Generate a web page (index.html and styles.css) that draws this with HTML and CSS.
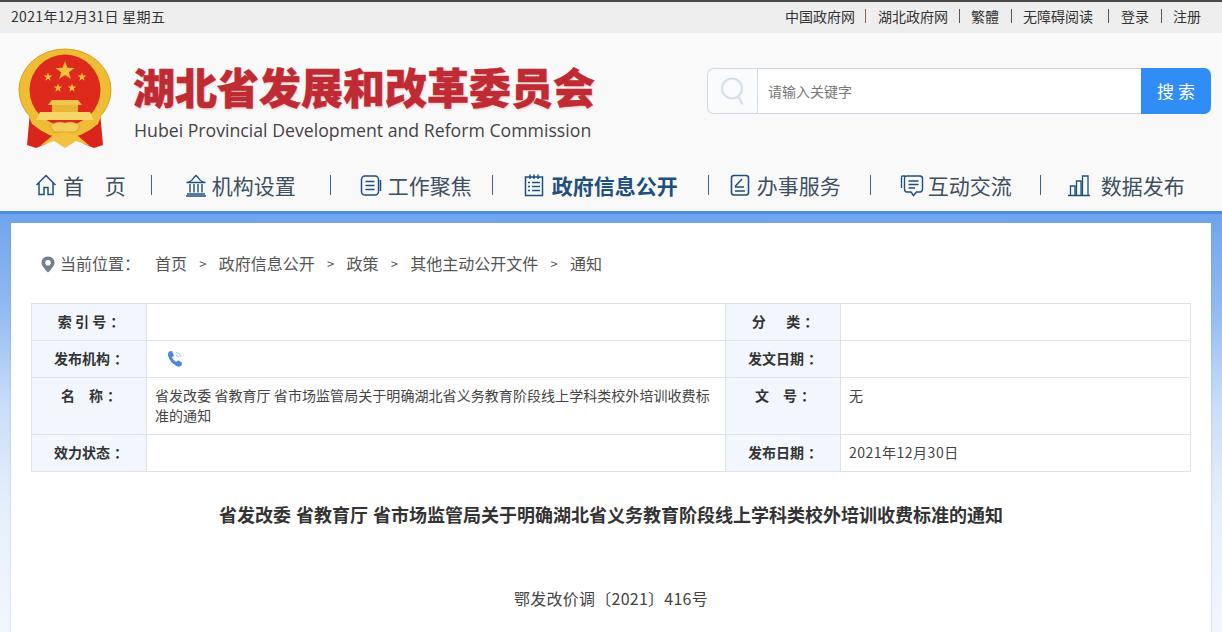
FILE: index.html
```html
<!DOCTYPE html>
<html lang="zh-CN">
<head>
<meta charset="utf-8">
<title>湖北省发展和改革委员会</title>
<link rel="stylesheet" href="styles.css">
</head>
<body>
<div class="topbar">
  <span class="date">2021年12月31日 星期五</span>
  <div class="toplinks">
    <a class="w1">中国政府网</a><i class="s1"></i><a class="w2">湖北政府网</a><i class="s2"></i><a class="w3">繁體</a><i class="s3"></i><a class="w4">无障碍阅读</a><i class="s4"></i><a class="w5">登录</a><i class="s5"></i><a>注册</a>
  </div>
</div>
<div class="head">
  <div class="brand">
    <svg class="emblem" width="100" height="102" viewBox="0 0 100 102">
      <defs><polygon id="st" points="0,-10 2.350,-3.240 9.510,-3.090 3.800,1.240 5.880,8.090 0,4 -5.880,8.090 -3.800,1.240 -9.510,-3.090 -2.350,-3.240"/></defs>
      <path d="M14 64 L11 97 L20 100 L30 96 L42 84 L30 72Z" fill="#d8261c"/>
      <path d="M84 64 L87 97 L78 100 L68 96 L56 84 L68 72Z" fill="#d8261c"/>
      <ellipse cx="49" cy="42" rx="46" ry="41" fill="#eebc35" stroke="#dca11f" stroke-width="1"/>
      <ellipse cx="49" cy="42" rx="35.500" ry="35.500" fill="#dd2a1c"/>
      <use href="#st" transform="translate(49 23) scale(1)" fill="#f3c03c"/>
      <use href="#st" transform="translate(32 29) scale(.45)" fill="#f3c03c"/>
      <use href="#st" transform="translate(66 29) scale(.45)" fill="#f3c03c"/>
      <use href="#st" transform="translate(42 40) scale(.45)" fill="#f3c03c"/>
      <use href="#st" transform="translate(56 40) scale(.45)" fill="#f3c03c"/>
      <path d="M36 52 H62 L66 57 H32Z" fill="#f2c64e"/>
      <rect x="36" y="57" width="26" height="7" fill="#e8b534"/>
      <path d="M24 64 H74 L78 72 H20Z" fill="#f7d566"/>
      <path d="M12 66 Q49 96 86 66 L82 76 Q49 104 16 76Z" fill="#eebc35"/>
      <path d="M34 78 Q41 72 49 75 Q57 72 64 78 L60 84 H38Z" fill="#f4cd5b" stroke="#c8901e" stroke-width=".6"/>
      <path d="M24 98 L36 88 L49 84 L62 88 L74 98 L60 93 L49 100 L38 93Z" fill="#f2c23f"/>
    </svg>
    <div class="brandtext">
      <div class="cn">湖北省发展和改革委员会</div>
      <div class="en">Hubei Provincial Development and Reform Commission</div>
    </div>
  </div>
  <div class="search">
    <div class="sicon">
      <svg width="26" height="30" viewBox="0 0 26 30"><circle cx="12" cy="12.500" r="10" fill="none" stroke="#d5deeb" stroke-width="2"/><path d="M18.500 21 L22 27.500" stroke="#d5deeb" stroke-width="2.500" stroke-linecap="round"/></svg>
    </div>
    <div class="sinput">请输入关键字</div>
    <div class="sbtn">搜 索</div>
  </div>
</div>
<nav class="nav">
  <a class="n1"><svg width="22" height="24" viewBox="0 0 22 24"><path d="M1.500 12 L11 2.500 L20.500 12 M4 10 V21.500 H9 V14.500 H13 V21.500 H18 V10" fill="none" stroke="#1f4f7f" stroke-width="1.500"/></svg><span class="wide">首 页</span></a><i class="bar b1"></i>
  <a class="n2"><svg width="22" height="24" viewBox="0 0 22 24"><path d="M1.500 9.500 Q6 9 8.500 5 L11 2.500 L13.500 5 Q16 9 20.500 9.500Z M2 21 H20 M1 23 H21 M5 11 V19.500 M9 11 V19.500 M13 11 V19.500 M17 11 V19.500" fill="none" stroke="#1f4f7f" stroke-width="1.400"/></svg><span>机构设置</span></a><i class="bar b2"></i>
  <a class="n3"><svg width="22" height="24" viewBox="0 0 22 24"><rect x="1.500" y="3" width="17" height="19" rx="3.500" fill="none" stroke="#1f4f7f" stroke-width="1.500"/><path d="M20.500 7 V18 M5.500 8.500 H14.500 M5.500 12.500 H14.500 M5.500 16.500 H14.500" fill="none" stroke="#1f4f7f" stroke-width="1.500"/></svg><span>工作聚焦</span></a><i class="bar b3"></i>
  <a class="n4 on"><svg width="20" height="24" viewBox="0 0 20 24"><rect x="1.500" y="4" width="17" height="18.500" fill="none" stroke="#1f4f7f" stroke-width="1.500"/><path d="M6 1.500 V6 M10 1.500 V6 M14 1.500 V6 M4 9.500 H6 M8 9.500 H16 M4 13.500 H6 M8 13.500 H16 M4 17.500 H6 M8 17.500 H16" fill="none" stroke="#1f4f7f" stroke-width="1.500"/></svg><span>政府信息公开</span></a><i class="bar b4"></i>
  <a class="n5"><svg width="20" height="24" viewBox="0 0 20 24"><rect x="1.500" y="2.500" width="17" height="19.500" rx="2.500" fill="none" stroke="#1f4f7f" stroke-width="1.600"/><path d="M5 13.500 L12 6 M5 14 H14 M5 18 H15" fill="none" stroke="#1f4f7f" stroke-width="1.500"/></svg><span>办事服务</span></a><i class="bar b5"></i>
  <a class="n6"><svg width="24" height="24" viewBox="0 0 24 24"><path d="M5 3 H2.500 Q1.500 3 1.500 4.500 V15" fill="none" stroke="#1f4f7f" stroke-width="1.300"/><path d="M7 3 H20 Q22.500 3 22.500 5.500 V16 Q22.500 19 20 19 H16.500 L13.500 22.500 L11 19 H7 Q4.500 19 4.500 16 V5.500 Q4.500 3 7 3Z M8.500 8 H18.500 M8.500 11.500 H18.500 M8.500 15 H15" fill="none" stroke="#1f4f7f" stroke-width="1.400"/></svg><span>互动交流</span></a><i class="bar b6"></i>
  <a class="n7"><svg width="24" height="24" viewBox="0 0 24 24"><path d="M1 22.500 H23 M3.500 22 V13 H8 V22 M9.500 22 V8 H14 V22 M15.500 22 V3 H21 V22" fill="none" stroke="#1f4f7f" stroke-width="1.300"/></svg><span>数据发布</span></a>
</nav>
<main class="stage">
  <div class="card">
    <div class="crumbs">
      <svg width="14" height="17" viewBox="0 0 14 17"><path d="M7 0.500 C3.200 0.500 0.500 3.300 0.500 6.800 C0.500 10.800 7 16.500 7 16.500 C7 16.500 13.500 10.800 13.500 6.800 C13.500 3.300 10.800 0.500 7 0.500Z" fill="#6f7f8c"/><circle cx="7" cy="6.800" r="2.800" fill="#fff"/></svg>
      <span class="where">当前位置：</span>
      <a>首页</a><em>&gt;</em><a>政府信息公开</a><em>&gt;</em><a>政策</a><em>&gt;</em><a>其他主动公开文件</a><em>&gt;</em><a>通知</a>
    </div>
    <table class="meta">
      <colgroup><col class="c1"><col class="c2"><col class="c3"><col class="c4"></colgroup>
      <tr class="r1"><th>索 引 号<span class="co">：</span></th><td></td><th>分&nbsp;&nbsp;　类<span class="co">：</span></th><td></td></tr>
      <tr class="r1"><th>发布机构<span class="co">：</span></th><td><svg class="phone" width="18" height="18" viewBox="0 0 18 18"><path d="M3 1.500 L6 1 L8 5.500 L6 7.300 Q7.200 10.500 10.200 12 L12 10.300 L16 12.500 L15.500 15.500 Q13.500 17.300 11 16.300 Q4 13 2 5.500 Q1.700 3 3 1.500Z" fill="#4a8ad4"/><path d="M10 2.500 Q14 3 15 7 M10 5 Q12 5.500 12.600 7.500" fill="none" stroke="#9dc0e8" stroke-width="1"/></svg></td><th>发文日期<span class="co">：</span></th><td></td></tr>
      <tr class="r2"><th>名　称<span class="co">：</span></th><td>省发改委 省教育厅 省市场监管局关于明确湖北省义务教育阶段线上学科类校外培训收费标准的通知</td><th>文　号<span class="co">：</span></th><td>无</td></tr>
      <tr class="r1"><th>效力状态<span class="co">：</span></th><td></td><th>发布日期<span class="co">：</span></th><td class="num">2021年12月30日</td></tr>
    </table>
    <h1 class="title">省发改委 省教育厅 省市场监管局关于明确湖北省义务教育阶段线上学科类校外培训收费标准的通知</h1>
    <p class="docno">鄂发改价调〔2021〕416号</p>
  </div>
</main>
</body>
</html>
```
FILE: styles.css
```css
* { box-sizing: border-box; }
html, body { margin: 0; padding: 0; height: 632px; overflow: hidden; }
body { font-family: "Noto Sans CJK SC", "Liberation Sans", sans-serif; color: #333; background: #fff; }
a { color: inherit; text-decoration: none; }
i, em { font-style: normal; }

.topbar { height: 33px; background: #eeeeee; border-top: 2px solid #4a4a4a; display: flex; justify-content: space-between; align-items: center; padding: 0 21px 3px 11px; font-size: 14px; color: #333; }
.date { letter-spacing: .33px; }
.toplinks { display: flex; align-items: center; }
.toplinks i { width: 1px; height: 14px; background: #555; }
.w1 { margin-right: 10px; }
.toplinks .s1 { margin-right: 12px; background: #8a6d3b; }
.w2 { margin-right: 11px; } .s2 { margin-right: 11px; }
.w3 { margin-right: 12px; } .s3 { margin-right: 11px; }
.w4 { margin-right: 15px; } .s4 { margin-right: 12px; }
.w5 { margin-right: 12px; } .s5 { margin-right: 11px; }

.head { height: 119px; background: #f9f9fa; display: flex; justify-content: space-between; padding: 15px 11px 0 16px; }
.brand { display: flex; }
.emblem { display: block; }
.brandtext { margin-left: 17px; margin-top: 13px; }
.cn { font-size: 42px; font-weight: 900; line-height: 50px; color: #bf2a33; white-space: nowrap; text-shadow: 1px 2px 2px #eed9d9; -webkit-text-stroke: .5px #bf2a33; }
.en { font-family: "Open Sans", "Liberation Sans", sans-serif; font-size: 17.700px; line-height: 26px; color: #444; margin-left: 1px; white-space: nowrap; margin-top: 6px; }

.search { width: 504px; height: 46px; margin-top: 20px; display: flex; border: 1px solid #cfd5e2; border-right: 0; border-radius: 7px; background: #fff; }
.sicon { width: 50px; display: flex; align-items: center; justify-content: center; background: #fafbfc; border-right: 1px solid #d4dae5; border-radius: 7px 0 0 7px; }
.sinput { flex: 1; font-size: 14px; color: #777; line-height: 44px; padding-left: 10px; }
.sbtn { width: 70px; margin: -1px 0; background: #2f8df5; color: #fff; font-size: 17px; text-align: center; line-height: 46px; border-radius: 0 7px 7px 0; }

.nav { height: 62px; background: #f9f9fa; border-bottom: 3px solid #4a90e2; display: flex; align-items: center; color: #1f4f7f; font-size: 21px; padding-top: 6px; }
.nav a { display: flex; align-items: center; white-space: nowrap; color: #3d4f60; }
.nav a svg { flex: none; }
.nav .on { color: #1f4f7f; font-weight: 700; }
.bar { width: 1px; height: 20px; background: #3d6488; flex: none; }
.wide { word-spacing: 16px; }
.n1 { margin-left: 35px; gap: 6px; } .b1 { margin-left: 25px; }
.n2 { margin-left: 33px; gap: 5px; } .b2 { margin-left: 34px; }
.n3 { margin-left: 29px; gap: 6px; } .b3 { margin-left: 20px; }
.n4 { margin-left: 31px; gap: 8px; } .b4 { margin-left: 30px; }
.n5 { margin-left: 21px; gap: 7px; } .b5 { margin-left: 29px; }
.n6 { margin-left: 29px; gap: 4px; } .b6 { margin-left: 28px; }
.n7 { margin-left: 26px; gap: 10px; }

.stage { height: 418px; padding: 9px 11px 0; background: linear-gradient(#6fa5ee 0, #8fb9f1 90px, #c8def8 190px, #e5effb 290px, #f3f7fd 418px); }
.card { background: #fff; height: 409px; padding: 0 20px; box-shadow: 0 0 2px rgba(90, 120, 160, .35); }

.crumbs { height: 80px; display: flex; align-items: center; font-size: 16px; color: #555; padding-left: 10px; }
.crumbs svg { flex: none; margin-right: 5px; margin-top: 2px; }
.where { margin-right: 15px; font-family: "Noto Sans CJK TC", sans-serif; }
.crumbs em { margin: 0 12.250px; font-size: 13px; }

.meta { width: 1160px; border-collapse: collapse; table-layout: fixed; font-size: 14px; color: #444; }
.c1, .c3 { width: 115px; }
.c2 { width: 579px; }
.meta th, .meta td { border: 1px solid #dfe3e8; padding: 0 8px 2px; }
.meta th { background: #f2f7fe; font-family: "Noto Sans CJK TC", sans-serif; font-weight: 700; color: #333; font-size: 14px; text-align: center; }
.co { margin-left: 4px; margin-right: -4px; }
.r1 { height: 37px; }
.r2 { height: 57px; }
.meta .r2 th, .meta .r2 td { vertical-align: top; padding-top: 7px; line-height: 20px; }
.meta .r2 td { letter-spacing: .06px; }
.meta .num { letter-spacing: .5px; }
.phone { display: block; margin-left: 11px; margin-top: 2px; }

.title { margin: 29px 0 0; font-size: 18px; line-height: 26px; font-weight: 700; text-align: center; color: #333; word-spacing: 1px; }
.docno { margin: 58px 0 0; font-size: 16px; line-height: 26px; text-align: center; color: #444; letter-spacing: .25px; }
```
